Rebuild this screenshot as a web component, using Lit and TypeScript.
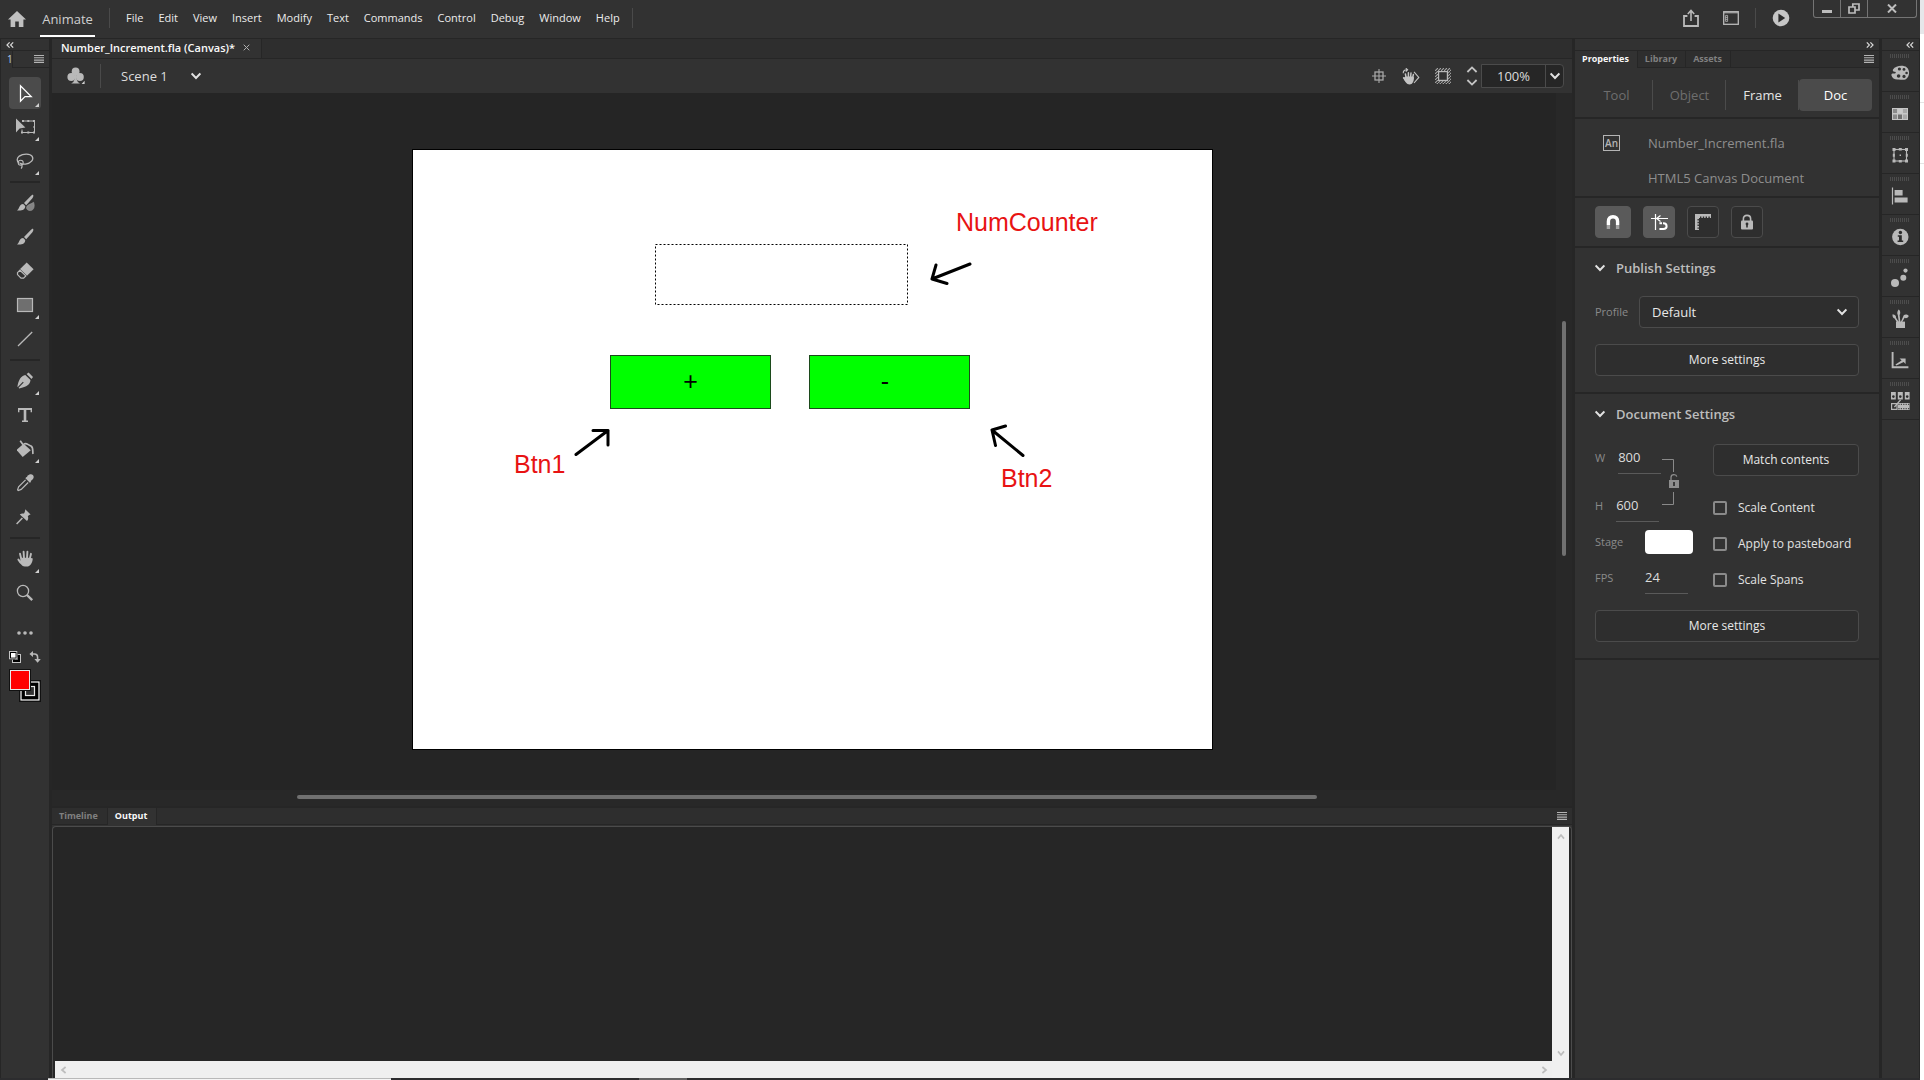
import { LitElement, html, css, svg } from "lit";
import { customElement, state } from "lit/decorators.js";

type Glyph = ReturnType<typeof svg>;

const glyph = (w: number, h: number, body: Glyph) =>
  html`<svg class="glyph" width=${w} height=${h} viewBox="0 0 ${w} ${h}" aria-hidden="true">${body}</svg>`;

const chevronDown = () =>
  glyph(10, 8, svg`<path d="M.6 1.5 L5 6 L9.4 1.5" fill="none" stroke="#e2e2e2" stroke-width="2"/>`);

const hamburger = () =>
  glyph(10, 8, svg`<path d="M0 .5H10M0 2.8H10M0 5.1H10M0 7.4H10" stroke="#b4b4b4" stroke-width="1.1"/>`);

const foldLeft = () =>
  glyph(8, 6, svg`<path d="M3.6 .4 L1 3 L3.6 5.6 M7.2 .4 L4.6 3 L7.2 5.6" fill="none" stroke="#d8d8d8" stroke-width="1.2"/>`);

const foldRight = () =>
  glyph(8, 6, svg`<path d="M.8 .4 L3.4 3 L.8 5.6 M4.4 .4 L7 3 L4.4 5.6" fill="none" stroke="#d8d8d8" stroke-width="1.2"/>`);

const I = "#b9b9b9";

interface Tool {
  name: string;
  more?: boolean;
  art: Glyph;
}

const toolGroups: Tool[][] = [
  [
    { name: "Selection", more: true, art: svg`<path d="M5.5 2.8V18.2L10 13.6H16.2Z" fill="none" stroke="#fff" stroke-width="1.3"/>` },
    {
      name: "Free Transform", more: true,
      art: svg`<path d="M1 1.5V15.5L4.6 11.4L10.4 10.4Z" fill=${I}/>
        <path d="M9 4H19.5V15.5H7V12.5" fill="none" stroke=${I}/>
        <path d="M6 14.5h2v2h-2zM12.3 14.5h2v2h-2zM18 14.5h2v2h-2zM18.5 9h1.8v2h-1.8zM18 3h2v2h-2zM12.3 3h2v2h-2zM7 3h2v2h-2z" fill=${I}/>`,
    },
    {
      name: "Lasso", more: true,
      art: svg`<path d="M4.2 12.3C1.4 10.6 1.6 7.2 4.3 5.1C8 2.4 15.2 2.3 17.2 5.4C19.1 8.6 16 12.4 10.6 13.1C8.7 13.3 6.6 13.1 5.4 12.6" fill="none" stroke=${I} stroke-width="1.3"/>
        <circle cx="5.7" cy="11.7" r="2.5" fill="none" stroke=${I} stroke-width="1.1"/><path d="M4.6 12.2C6.8 12.4 8 14.6 6.2 17.6" fill="none" stroke=${I} stroke-width="1.2"/>`,
    },
  ],
  [
    {
      name: "Fluid Brush",
      art: svg`<path d="M18 1.8C18.8 2.6 18.3 3.9 17.4 5.2L11.2 12.2L9 10L15.8 3C16.7 2.1 17.4 1.4 18 1.8Z" fill=${I}/>
        <path d="M8.2 11L10.2 13C10.5 16.6 6.6 18.1 2 17.4C4.6 16.4 3.6 11.4 8.2 11Z" fill=${I}/>
        <path d="M18.6 9.3C19.7 12.2 19.6 17.4 15.2 17.6C12.8 17.6 11.2 16 11.6 14.2C12.1 11.8 15.5 11.4 18.6 9.3Z" fill="#858585" stroke="#9c9c9c" stroke-width=".6"/>`,
    },
    {
      name: "Classic Brush",
      art: svg`<path d="M18 1.8C18.8 2.6 18.3 3.9 17.4 5.2L11.2 12.2L9 10L15.8 3C16.7 2.1 17.4 1.4 18 1.8Z" fill=${I}/>
        <path d="M8.2 11L10.2 13C10.5 16.6 6.6 18.1 2 17.4C4.6 16.4 3.6 11.4 8.2 11Z" fill=${I}/>`,
    },
    {
      name: "Eraser",
      art: svg`<path d="M11.7 1.6L18.6 8.3L12 14.8L5.1 8.1Z" fill=${I}/>
        <path d="M5 9.2L10.8 14.9L8.6 17.1H6L2.5 13.6V11.7Z" fill="none" stroke=${I} stroke-width="1.2"/>`,
    },
    { name: "Rectangle", more: true, art: svg`<rect x="2.5" y="3.5" width="15" height="13" fill="#6f6f6f" stroke=${I} stroke-width="1.2"/>` },
    { name: "Line", art: svg`<path d="M3 17L17.2 3" stroke=${I} stroke-width="1.3"/>` },
  ],
  [
    {
      name: "Pen", more: true,
      art: svg`<path d="M11.6 2.9L13.6 1.4L18 5.9L16.5 8Z" fill=${I}/>
        <path d="M10.3 4L15.5 9C15.1 13.3 12 16 4.2 17.4L3.6 16.8L8.7 11.6L7.9 10.8L2.8 16L2.4 15.6C3.6 8.8 6 4.9 10.3 4Z" fill=${I}/>`,
    },
    { name: "Text", art: svg`<path d="M3 3H17V7.3H15.6V5H11.3V15.6H13V17H7V15.6H8.7V5H4.4V7.3H3Z" fill=${I}/>` },
    {
      name: "Paint Bucket", more: true,
      art: svg`<path d="M8.6 4.8L15.8 11.2L7.7 18L2 11.6V10.6Z" fill=${I}/>
        <path d="M5.2 1.8L10.6 9.2M9 5.2C11 3 13.2 6.2 16 7C18.6 8.6 17.4 12 18 15" fill="none" stroke=${I} stroke-width="1.7"/>`,
    },
    {
      name: "Eyedropper",
      art: svg`<path d="M12.4 2.8C14.4 .8 16.8 .7 18.1 2.3C19.3 3.9 18.6 5.7 17 7L15.7 8L16 9L14.8 9.8L10.4 5.2L11.3 4.1L12 4.2Z" fill=${I}/>
        <path d="M10.6 6.8L3.6 13.8L2.6 16.9L3.2 17.5L6.2 16.4L13.2 9.5" fill="none" stroke=${I} stroke-width="1.2"/>`,
    },
    {
      name: "Asset Warp",
      art: svg`<path d="M10.2 2.3L15.6 7.6C14.4 7.8 13.6 8.4 12.8 9.2C13.6 11 13.2 12.6 12 14L4.8 7.4C6 6.4 7.6 6.2 9 6.6C9.8 5.4 10.2 4 10.2 2.3Z" fill=${I}/>
        <path d="M7.4 11L1.6 17" stroke=${I} stroke-width="1.5"/>`,
    },
  ],
  [
    {
      name: "Hand", more: true,
      art: svg`<path d="M6.4 10.5L5 4.7M9 9.6L8.6 2.8M12 9.6L12.4 2.8M14.6 10.6L16 4.8M5.6 13.6L3.4 10.6" stroke=${I} stroke-width="1.9" stroke-linecap="round"/>
        <path d="M5.6 8.8L15.4 8.8L17.8 9.4C17.6 12 16.4 17.6 11.4 17.6C7 17.6 5.4 15 3 10.4L5.8 11.6Z" fill=${I}/>`,
    },
    {
      name: "Zoom",
      art: svg`<circle cx="8" cy="8" r="5.6" fill="none" stroke=${I} stroke-width="1.3"/><path d="M12 12L17.2 17.2" stroke=${I} stroke-width="2.4"/>`,
    },
  ],
];

const dockArt: { name: string; art: Glyph }[] = [
  {
    name: "Color",
    art: svg`<path fill-rule="evenodd" d="M3 6.4C5.6 2.8 13 1.6 16.8 4.4C20.4 7.4 19.6 14.6 15.4 16.4C12.6 17.4 10.4 16.2 7.8 16.4C4.8 16.6 2 15.2 1.4 12.2C1.2 10.6 2.8 10.4 4.2 10.6C5.8 10.6 6.4 9.4 5.2 8.8C3.8 8.6 2.2 8 3 6.4Z" fill=${I}/>
      <g fill="#323232"><circle cx="9.4" cy="6" r="1.6"/><circle cx="14" cy="6.4" r="1.4"/><circle cx="16.6" cy="10" r="1.3"/><circle cx="14" cy="13.4" r="1.6"/><circle cx="8.6" cy="13" r="1.8"/></g>`,
  },
  {
    name: "Swatches",
    art: svg`<rect x="2" y="4" width="16" height="12" fill="#c6c6c6"/><path d="M3 5h4v4h-4zM3 10.5h4v4.5h-4z" fill="#8b8b8b"/><path d="M8 5h4v4h-4z" fill="#c9c9c9"/><path d="M13 5h4v4h-4zM13 10.5h4v4.5h-4z" fill="#a7a7a7"/><path d="M8 10.5h4v4.5h-4z" fill="#6f6f6f"/>`,
  },
  {
    name: "Align Bounds",
    art: svg`<rect x="4" y="4.5" width="12.5" height="11.5" fill="none" stroke=${I} stroke-width="1.1"/><path d="M2.5 3h3v3h-3zM8.8 3h3v2.4h-3zM15 3h3v3h-3zM2.5 14.6h3v3h-3zM8.8 15h3v2.6h-3zM15 14.6h3v3h-3zM2.8 8.8h2v3h-2zM15.8 8.8h2v3h-2zM9.6 9.6h1.4v1.4h-1.4z" fill=${I}/>`,
  },
  { name: "Align", art: svg`<path d="M2.5 1.5V18.5" stroke=${I} stroke-width="1.2"/><path d="M4.6 4H12.6V9.4H4.6ZM4.6 11.6H17.6V16.6H4.6Z" fill=${I}/>` },
  {
    name: "Info",
    art: svg`<circle cx="10.3" cy="10" r="8.2" fill=${I}/><circle cx="10.4" cy="5.5" r="1.7" fill="#2c2c2c"/><path d="M7.8 8.2H11.8V13.4H13.2V15H7.6V13.4H9V9.8H7.8Z" fill="#2c2c2c"/>`,
  },
  { name: "Motion Presets", art: svg`<circle cx="5" cy="15" r="4" fill=${I}/><circle cx="13.3" cy="9.8" r="3" fill=${I}/><circle cx="15.5" cy="2.6" r="2.1" fill=${I}/>` },
  {
    name: "Brush Library",
    art: svg`<path d="M6 12.6H15V19H6Z" fill=${I}/><path d="M8.6 .4C10.8 1.8 10.4 4.8 9.6 6L10.4 13H8.8L7.8 6C6.8 4.6 7.4 1.8 8.6 .4ZM2.6 5.2C5.2 5.4 6.4 7.2 6 8.8L8.8 13H6.8L4.6 9.4C3 9.2 2.2 7 2.6 5.2ZM18.8 7C17.6 9.2 16 9.6 14.6 8.8L12.2 13H10.8L13.2 7.6C13.4 5.6 16.6 4.6 18.8 7Z" fill=${I}/>`,
  },
  { name: "Transform", art: svg`<path d="M2.6 2V17.2H18.4" fill="none" stroke=${I} stroke-width="1.9"/><path d="M9.6 8.4H15.6V14L13.7 12.1L6.4 15.6L5.4 14.4L11.6 10.4Z" fill=${I}/>` },
  {
    name: "Frame Picker",
    art: svg`<path d="M1 1h4.8v7.4H1zM7.8 1h5v7.4h-5zM14.8 1h4.8v7.4h-4.8z" fill=${I}/><g fill="#2c2c2c"><circle cx="3.4" cy="5.6" r="1.3"/><circle cx="10.3" cy="5.6" r="1.3"/><circle cx="17.2" cy="5.6" r="1.3"/></g>
      <path d="M1.6 12.6H7V18.4H1.6Z" fill="none" stroke=${I} stroke-width="1.2"/><path d="M8 12H19.6V19H8Z" fill=${I}/><path d="M8.4 13.3H19.6M8.4 17.7H19.6" stroke="#2c2c2c" stroke-width="1" stroke-dasharray="1.2 1.2"/><path d="M4.4 16L10.6 8.8" stroke=${I} stroke-width="1.3"/>`,
  },
];

const menus = ["File", "Edit", "View", "Insert", "Modify", "Text", "Commands", "Control", "Debug", "Window", "Help"];

@customElement("app-root")
export class AppRoot extends LitElement {
  @state() private tool = "Selection";

  static styles = css`
    :host {
      display: grid;
      grid-template-columns: minmax(0, 1fr) 4px;
      height: 100vh;
      overflow: hidden;
      background: #262626;
      color: #dcdcdc;
      font: 12px/16px "Open Sans", "Noto Sans", sans-serif;
    }
    * { box-sizing: border-box; }
    .glyph { display: block; flex: none; }
    button, input, select {
      margin: 0; padding: 0; border: 0; background: none;
      color: inherit; font: inherit; border-radius: 0; outline: none;
    }
    .window { display: grid; grid-template-rows: 39px minmax(0, 1fr) 2px; min-width: 0; min-height: 0; }
    .behind {
      background: linear-gradient(#e6e7ea 34px, #fff 34px, #fff 102px, #e4e4e4 102px, #e4e4e4 103px, #fff 103px, #fff 163px, #e4e4e4 163px, #e4e4e4 164px, #fff 164px);
    }

    .menubar { display: flex; background: #323232; border-bottom: 1px solid #262626; padding: 0 3px 0 8px; }
    .home { display: flex; align-items: center; width: 32px; }
    .brand {
      width: 55px; height: 37px; padding-top: 3px; margin-right: 14px; font-size: 13px; text-align: center;
      border-bottom: 2px solid #fff; color: #cfcfcf;
    }
    .rule { width: 1px; background: #4a4a4a; height: 20px; margin-top: 8px; }
    .menus { display: flex; height: 36px; margin: 0 5px 0 8px; font-size: 11px; }
    .menus button { padding: 0 7px 0 8px; color: #ececec; }
    .app-tools { display: flex; align-items: flex-start; margin-left: auto; }
    .app-tools .icon { display: grid; place-items: center; height: 36px; width: 40px; }
    .app-tools .rule { margin-left: 4px; margin-right: 5px; }
    .win-controls {
      display: flex; height: 18px; margin-left: 12px;
      border: 1px solid #747474; border-top: 0; border-radius: 0 0 3px 3px;
    }
    .win-controls button { display: grid; place-items: center; width: 27px; border-right: 1px solid #747474; }
    .win-controls .close { width: 48px; border-right: 0; }

    .workspace {
      display: grid; grid-template-columns: 48px minmax(0, 1fr) 304px 37px; column-gap: 3px;
      padding: 0 1px; min-height: 0;
    }
    .fold {
      display: flex; align-items: center; height: 12px; background: #323232;
      border-bottom: 1px solid #262626; padding: 0 5px;
    }
    .fold.end { justify-content: flex-end; }

    .toolbar { background: #323232; display: flex; flex-direction: column; }
    .tool-tabs { display: flex; height: 17px; }
    .tool-tabs .one { width: 11px; padding-left: 6px; font-size: 10px; color: #b7d0ea; overflow: hidden; }
    .tool-tabs .menu {
      flex: 1; display: flex; align-items: center; justify-content: flex-end; padding-right: 5px;
      border-left: 1px solid #262626; border-bottom: 1px solid #262626;
    }
    .tools { display: flex; flex-direction: column; padding-top: 8px; }
    .group { display: flex; flex-direction: column; align-items: center; }
    .group + .group::before {
      content: ""; width: 30px; height: 8px;
      background: linear-gradient(transparent 3px, #262626 3px, #262626 5px, transparent 5px);
    }
    .tool {
      display: grid; place-items: center; width: 32px; height: 32px; margin: 1px 0; border-radius: 4px;
      position: relative;
    }
    .tool.on { background: #4b4b4b; }
    .tool.more::after {
      content: ""; position: absolute; right: 2px; bottom: 2px; border: 2px solid transparent;
      border-right-color: #d0d0d0; border-bottom-color: #d0d0d0;
    }
    .overflow { display: grid; place-items: center; height: 41px; padding-top: 5px; }
    .color-row { display: flex; justify-content: space-between; padding: 0 8px; height: 13px; }
    .swatches { padding: 5px 0 0 8px; }

    .document { display: flex; flex-direction: column; min-width: 0; min-height: 0; }
    .doc-tabs { display: flex; height: 20px; background: #2e2e2e; border-bottom: 1px solid #262626; }
    .doc-tab {
      display: flex; align-items: center; gap: 8px; padding: 0 11px 2px 9px; background: #323232;
      border-right: 1px solid #262626; font-size: 11px; font-weight: 600; color: #fafafa;
    }
    .scene-bar { display: flex; align-items: center; height: 34px; background: #323232; padding: 0 8px 0 15px; }
    .scene-bar .rule { height: 24px; margin: 0 20px 0 15px; }
    .scene { display: flex; align-items: center; gap: 23px; font-size: 13px; }
    .view-tools { margin-left: auto; display: flex; align-items: center; gap: 15px; }
    .spin { display: grid; gap: 6px; }
    .zoom {
      display: flex; height: 24px; margin-left: -12px; background: #262626; border: 1px solid #4b4b4b;
      border-radius: 0 4px 4px 0;
    }
    .zoom input { width: 64px; text-align: center; font-size: 13px; border-right: 1px solid #4b4b4b; }
    .zoom button { display: grid; place-items: center; width: 17px; }

    .canvas {
      flex: 1; min-height: 0; display: grid; background: #282828;
      grid-template: minmax(0, 1fr) 16px / minmax(0, 1fr) 16px;
    }
    .pasteboard { background: #252525; padding: 56px 0 0 360px; overflow: hidden; }
    .v-scroll { display: grid; grid-template-rows: 228fr 235fr 234fr; justify-items: center; }
    .v-scroll i { grid-row: 2; width: 4px; border-radius: 2px; background: #707070; }
    .h-scroll { display: grid; grid-template-columns: 245fr 1020fr 239fr; align-items: start; padding-top: 5px; }
    .h-scroll i { grid-column: 2; height: 4px; border-radius: 2px; background: #707070; }
    .stage {
      position: relative; width: 801px; height: 601px; background: #fff; border: 1px solid #000;
      font: 25px/28px "Liberation Sans", Arial, sans-serif; color: #e81313;
    }
    .stage > * { position: absolute; }
    .arrows { left: 0; top: 0; }
    .shape {
      top: 205px; width: 161px; height: 54px; background: #0f0; border: 1px solid #1c4a1c; color: #000;
      padding-bottom: 2px;
    }
    .plus { left: 197px; }
    .minus { left: 396px; padding-right: 9px; }
    .name-counter { left: 543px; top: 58px; }
    .name-one { left: 101px; top: 300px; }
    .name-two { left: 588px; top: 314px; }

    .panel { flex: 0 0 25vh; display: flex; flex-direction: column; margin-top: 2px; background: #323232; }
    .tabs {
      display: flex; height: 17px; background: #2e2e2e; border-bottom: 1px solid #262626;
      font-size: 9px; font-weight: 700; line-height: 14px; color: #808080;
    }
    .tabs button { padding: 0 8px 1px 7px; border-right: 1px solid #262626; }
    .panel .tabs button { padding-right: 9px; }
    .tabs .on { background: #323232; color: #f8f8f8; height: 17px; padding-bottom: 2px; }
    .panel .tabs .menu, .tabs .menu { margin-left: auto; padding: 0 5px; border: 0; }
    .output {
      flex: 1; display: grid; grid-template: minmax(0, 1fr) 17px / minmax(0, 1fr) 17px;
      margin: 1px 0 0; padding: 0 2px; background: #262626;
      border: 1px solid #4b4b4b; border-bottom: 0; border-radius: 4px 4px 0 0;
    }
    .bar { display: flex; justify-content: space-between; align-items: center; background: #f0f0f0; }
    .bar.v { flex-direction: column; padding: 6px 0 4px; }
    .bar.h { padding: 0 4px 0 5px; background: #efefef; }
    .corner { background: #f0f0f0; }

    .props { display: flex; flex-direction: column; background: #323232; min-height: 0; }
    .section { border-bottom: 2px solid #262626; padding: 0 20px; }
    .segments { display: grid; grid-template-columns: repeat(4, 1fr); padding: 11px 7px 6px 5px; font-size: 13px; }
    .segments button { height: 32px; background: linear-gradient(#4b4b4b, #4b4b4b) right / 1px 30px no-repeat; color: #e4e4e4; }
    .segments .off { color: #6e6e6e; }
    .segments .on { background: #4b4b4b; border-radius: 4px; color: #fff; }
    .info { display: grid; grid-template-columns: 45px 1fr; row-gap: 11px; padding: 12px 20px 6px 28px; font-size: 13px; line-height: 24px; color: #8e8e8e; }
    .info .an {
      width: 17px; height: 16px; margin-top: 4px; border: 1px solid #b4b4b4; color: #b4b4b4;
      font-size: 10px; line-height: 14px; font-weight: 600; text-align: center;
    }
    .info .kind { grid-column: 2; }
    .snaps { display: flex; gap: 12px; padding-top: 8px; padding-bottom: 8px; }
    .snaps button { display: grid; place-items: center; width: 32px; height: 32px; border: 1px solid #4b4b4b; border-radius: 4px; background: #2e2e2e; }
    .snaps .on { background: #5a5a5a; border-color: #5a5a5a; }
    .snaps .wide { width: 36px; }
    .block { padding-top: 4px; padding-bottom: 16px; }
    h2 { display: flex; align-items: center; gap: 11px; height: 32px; margin: 0; font-size: 13px; font-weight: 600; color: #bdbdbd; }
    .profile { display: flex; align-items: center; margin: 12px 0 16px; }
    .profile label { width: 44px; }
    label.dim { color: #8a8a8a; font-size: 11px; }
    .select { flex: 1; display: grid; align-items: center; }
    .select > * { grid-area: 1 / 1; }
    .select .glyph { justify-self: end; margin-right: 12px; pointer-events: none; }
    .boxed { height: 32px; border: 1px solid #4b4b4b; border-radius: 4px; background: #2e2e2e; color: #e8e8e8; }
    select { appearance: none; padding-left: 12px; width: 100%; font-size: 13px; }
    .full { width: 100%; display: block; }
    .form { display: grid; grid-template-columns: 118px 1fr; grid-template-rows: 60px 36px 36px 36px; align-items: center; margin-bottom: 12px; }
    .field { grid-column: 1; display: flex; align-items: center; gap: 13px; padding-bottom: 4px; }
    .field.fixed { gap: 0; }
    .field.fixed label { width: 50px; }
    .field input { width: 43px; height: 32px; padding-bottom: 2px; border-bottom: 1px solid #5a5a5a; font-size: 13px; }
    .stage-color { width: 48px; height: 24px; border-radius: 4px; background: #fff; }
    .link { grid-area: 1 / 1 / 3 / 2; align-self: end; justify-self: start; margin: 0 0 16px 67px; }
    .side { grid-column: 2; }
    .check { display: flex; align-items: center; gap: 11px; white-space: nowrap; color: #e2e2e2; }
    .check input { appearance: none; width: 14px; height: 14px; border: 2px solid #8a8a8a; border-radius: 2px; }
    .r1 { grid-row: 1; } .r2 { grid-row: 2; } .r3 { grid-row: 3; } .r4 { grid-row: 4; }

    .dock { display: flex; flex-direction: column; background: #323232; }
    .dock-item {
      display: flex; flex-direction: column; align-items: center; gap: 5px; height: 41px; padding: 3px 2px 0 0;
      border-bottom: 1px solid #262626;
    }
    .dock-item::before {
      content: ""; width: 20px; height: 4px;
      background: repeating-linear-gradient(90deg, #4c4c4c 0 1px, transparent 1px 2px);
    }
    .taskbar { display: grid; grid-template-columns: 48px 343px 248px 48px minmax(0, 1fr); background: #2c2c2e; }
    .taskbar .search { background: #f4f4f4; border-top: 1px solid #b8b8b8; }
    .taskbar .app { grid-column: 4; background: #626262; }
  `;

  private renderMenubar() {
    return html`
      <header class="menubar">
        <button class="home" aria-label="Home">
          ${glyph(18, 16, svg`<path d="M9 0L18 8.6H15.4V16H10.8V10.4H7.2V16H2.6V8.6H0Z" fill="#c0c0c0"/>`)}
        </button>
        <button class="brand">Animate</button>
        <span class="rule"></span>
        <nav class="menus">${menus.map((m) => html`<button>${m}</button>`)}</nav>
        <span class="rule"></span>
        <div class="app-tools">
          <button class="icon" aria-label="Share">
            ${glyph(16, 18, svg`<path d="M4.4 7H1V17H15V7H11.6" fill="none" stroke=${I} stroke-width="1.8"/><path d="M8 12V2M4.8 5L8 1.4L11.2 5" fill="none" stroke=${I} stroke-width="1.6"/>`)}
          </button>
          <button class="icon" aria-label="Workspaces">
            ${glyph(16, 14, svg`<rect x=".7" y=".7" width="14.6" height="12.6" fill="none" stroke=${I} stroke-width="1.3"/><path d="M1 1.8H15" stroke=${I} stroke-width="1"/><path d="M2.6 4.4H4.6V10.4H2.6ZM2.6 6.4H4.6M2.6 8.4H4.6" fill="none" stroke=${I} stroke-width=".8"/>`)}
          </button>
          <span class="rule"></span>
          <button class="icon" aria-label="Test Movie">
            ${glyph(18, 18, svg`<circle cx="9" cy="9" r="8.3" fill="#c6c6c6"/><path d="M6.4 4.6L13.2 9L6.4 13.4Z" fill="#2b2b2b"/>`)}
          </button>
          <div class="win-controls">
            <button aria-label="Minimize">${glyph(10, 10, svg`<path d="M0 6H10V9H0Z" fill="#bdbdbd"/>`)}</button>
            <button aria-label="Restore">
              ${glyph(12, 11, svg`<path d="M4.8 1H11V7H4.8Z" fill="none" stroke="#bdbdbd" stroke-width="1.7"/><path d="M1 4H7V10H1Z" fill="#323232" stroke="#bdbdbd" stroke-width="1.7"/>`)}
            </button>
            <button class="close" aria-label="Close">${glyph(10, 9, svg`<path d="M1 .5L9 8.5M9 .5L1 8.5" stroke="#bdbdbd" stroke-width="2"/>`)}</button>
          </div>
        </div>
      </header>
    `;
  }

  private renderTool(t: Tool) {
    return html`<button
      class="tool ${t.name === this.tool ? "on" : ""} ${t.more ? "more" : ""}"
      aria-label=${t.name}
      @click=${() => (this.tool = t.name)}
    >${glyph(20, 20, t.art)}</button>`;
  }

  private renderToolbar() {
    return html`
      <aside class="toolbar">
        <div class="fold">${foldLeft()}</div>
        <div class="tool-tabs"><span class="one">1</span><span class="menu">${hamburger()}</span></div>
        <div class="tools">${toolGroups.map((g) => html`<div class="group">${g.map((t) => this.renderTool(t))}</div>`)}</div>
        <button class="overflow" aria-label="Edit Toolbar">
          ${glyph(16, 4, svg`<circle cx="2" cy="2" r="1.8" fill=${I}/><circle cx="8" cy="2" r="1.8" fill=${I}/><circle cx="14" cy="2" r="1.8" fill=${I}/>`)}
        </button>
        <div class="color-row">
          ${glyph(12, 12, svg`<rect x="3.5" y="3.5" width="8" height="8" fill="#000" stroke="#c4c4c4"/><rect x="6.5" y="6.5" width="2" height="2" fill="#323232" stroke="#c4c4c4" stroke-width=".8"/><rect x="0" y="0" width="8.6" height="8.6" fill="#000"/><rect x=".5" y=".5" width="7.4" height="7.4" fill="#000" stroke="#c4c4c4"/><rect x="2" y="2" width="4.6" height="4.6" fill="#fff"/>`)}
          ${glyph(12, 12, svg`<path d="M3 3H5.4Q8.6 3 8.6 6.4V8.6" fill="none" stroke=${I} stroke-width="1.6"/><path d="M4 0V6L.4 3ZM5.4 8H11.8L8.6 11.8Z" fill=${I}/>`)}
        </div>
        <div class="swatches">
          ${glyph(32, 34, svg`<rect x="10.5" y="11.5" width="21" height="21" fill="#000" stroke="#111"/><rect x="12" y="13" width="18" height="18" fill="#000" stroke="#fff" stroke-width="1.2"/><rect x="16.5" y="17.5" width="9" height="9" fill="#323232" stroke="#e8e8e8" stroke-width="1.2"/><rect x=".5" y=".5" width="21" height="21" fill="#111" stroke="#111"/><rect x="1.5" y="1.5" width="19" height="19" fill="#f00" stroke="#e8e8e8"/>`)}
        </div>
      </aside>
    `;
  }

  private renderDocument() {
    return html`
      <main class="document">
        <div class="doc-tabs">
          <span class="doc-tab">Number_Increment.fla (Canvas)*
            <button aria-label="Close document">${glyph(7, 7, svg`<path d="M.7 .7L6.3 6.3M6.3 .7L.7 6.3" stroke="#b0b0b0"/>`)}</button>
          </span>
        </div>
        <div class="scene-bar">
          <button aria-label="Edit Symbols">
            ${glyph(18, 18, svg`<circle cx="8.6" cy="4.4" r="3.9" fill=${I}/><circle cx="4.3" cy="10" r="3.9" fill=${I}/><circle cx="12.9" cy="10" r="3.9" fill=${I}/><path d="M7.6 6H9.6V12Q10.2 15.4 13 16.6H4.2Q7 15.4 7.6 12Z" fill=${I}/><path d="M17.6 13.8V17H14.6Z" fill="#d0d0d0"/>`)}
          </button>
          <span class="rule"></span>
          <button class="scene">Scene 1 ${chevronDown()}</button>
          <div class="view-tools">
            <button aria-label="Center Stage">
              ${glyph(16, 16, svg`<path d="M8 1V15M1 8H15" stroke="#a8a8a8" stroke-width="1.1"/><rect x="4" y="4" width="8" height="8" fill="none" stroke="#a8a8a8" stroke-width="1.3"/>`)}
            </button>
            <button aria-label="Rotation">
              ${glyph(18, 17, svg`<path d="M4.2 10L3.4 6M6.4 9V4.8M8.6 9L9 5M10.6 10L11.4 6.4M3.6 12.6L1.6 9.8" stroke="#c4c4c4" stroke-width="1.5" stroke-linecap="round"/><path d="M3.6 8.4H11L12 9.4C12 13 10.6 16.4 7.6 16.4C4.4 16.4 3 13.4 1.4 10Z" fill="#c4c4c4"/><path d="M12 3.8L16.8 9.4L12 15M1.2 5.2C1.2 2.6 2.8 1.6 5 1.8M3.8 .2L5.6 1.8L3.8 3.6" fill="none" stroke="#c4c4c4" stroke-width="1.1"/>`)}
            </button>
            <button aria-label="Clip Content">
              ${glyph(16, 16, svg`<defs><pattern id="hatch" width="3" height="3" patternUnits="userSpaceOnUse"><path d="M0 3L3 0" stroke="#a4a4a4" stroke-width="1.1"/></pattern></defs><path fill-rule="evenodd" d="M0 0H16V16H0ZM3.6 3.6V12.4H12.4V3.6Z" fill="url(#hatch)"/><rect x="3.6" y="3.6" width="8.8" height="8.8" fill="none" stroke="#b9b9b9" stroke-width="1.2"/>`)}
            </button>
            <div class="spin">
              <button aria-label="Zoom in">${glyph(12, 7, svg`<path d="M1.4 6L6 1.4L10.6 6" fill="none" stroke="#c4c4c4" stroke-width="1.8"/>`)}</button>
              <button aria-label="Zoom out">${glyph(12, 7, svg`<path d="M1.4 1L6 5.6L10.6 1" fill="none" stroke="#c4c4c4" stroke-width="1.8"/>`)}</button>
            </div>
            <div class="zoom">
              <input aria-label="Zoom level" value="100%" />
              <button aria-label="Zoom presets">${chevronDown()}</button>
            </div>
          </div>
        </div>
        <div class="canvas">
          <div class="pasteboard">
            <div class="stage">
              <svg class="arrows" width="800" height="600" viewBox="0 0 800 600" aria-hidden="true">
                <rect x="242.5" y="94.5" width="252" height="60" fill="none" stroke="#000" stroke-dasharray="2 2" />
                <path
                  d="M557 114L519 129M523 115L519 129L534 133.5M163 304.5L195 280.5M180 280.5H195V295M610 305.5L579 280M592.5 276L579 280L582.5 295.5"
                  fill="none" stroke="#000" stroke-width="3" stroke-linecap="round" stroke-linejoin="round"
                />
              </svg>
              <button class="shape plus">+</button>
              <button class="shape minus">-</button>
              <span class="name-counter">NumCounter</span>
              <span class="name-one">Btn1</span>
              <span class="name-two">Btn2</span>
            </div>
          </div>
          <div class="v-scroll"><i></i></div>
          <div class="h-scroll"><i></i></div>
        </div>
        <section class="panel">
          <div class="tabs">
            <button>Timeline</button><button class="on">Output</button>
            <button class="menu" aria-label="Panel menu">${hamburger()}</button>
          </div>
          <div class="output">
            <div role="log" aria-label="Output"></div>
            <div class="bar v">
              ${glyph(8, 7, svg`<path d="M1 5.6L4 2L7 5.6" fill="none" stroke="#bdbdbd" stroke-width="1.7"/>`)}
              ${glyph(8, 7, svg`<path d="M1 1.4L4 5L7 1.4" fill="none" stroke="#bdbdbd" stroke-width="1.7"/>`)}
            </div>
            <div class="bar h">
              ${glyph(7, 8, svg`<path d="M5.6 1L2 4L5.6 7" fill="none" stroke="#bdbdbd" stroke-width="1.7"/>`)}
              ${glyph(7, 8, svg`<path d="M1.4 1L5 4L1.4 7" fill="none" stroke="#bdbdbd" stroke-width="1.7"/>`)}
            </div>
            <div class="corner"></div>
          </div>
        </section>
      </main>
    `;
  }

  private renderProperties() {
    return html`
      <aside class="props">
        <div class="fold end">${foldRight()}</div>
        <div class="tabs">
          <button class="on">Properties</button><button>Library</button><button>Assets</button>
          <button class="menu" aria-label="Panel menu">${hamburger()}</button>
        </div>
        <div class="section segments">
          <button class="off">Tool</button><button class="off">Object</button><button>Frame</button><button class="on">Doc</button>
        </div>
        <div class="section info">
          <span class="an">An</span><span>Number_Increment.fla</span>
          <span class="kind">HTML5 Canvas Document</span>
        </div>
        <div class="section snaps">
          <button class="on wide" aria-label="Snap to Objects">
            ${glyph(14, 14, svg`<path d="M2.4 10V6.4Q2.4 1.8 7 1.8Q11.6 1.8 11.6 6.4V10" fill="none" stroke="#fff" stroke-width="3.4"/><path d="M.7 10H4.1V14H.7ZM9.9 10H13.3V14H9.9Z" fill="#a4a4a4"/>`)}
          </button>
          <button class="on" aria-label="Snap Align">
            ${glyph(17, 17, svg`<path d="M4.5 0V16M0 4.5H17M9.5 1.5L5.6 4.5L9.5 7.5" fill="none" stroke="#fff" stroke-width="1.2"/><path d="M8.4 9.2H12.4Q15.6 9.2 15.6 12.2Q15.6 15 12.4 15H8.4" fill="none" stroke="#fff" stroke-width="2" stroke-dasharray="2.6 1 20"/>`)}
          </button>
          <button aria-label="Rulers">
            ${glyph(18, 18, svg`<path d="M1 1H17V5H5V17H1Z" fill=${I}/><path d="M6 4.2H17M4.2 6V17" stroke="#2e2e2e" stroke-width="1.4" stroke-dasharray="1.4 1.4"/>`)}
          </button>
          <button aria-label="Lock Guides">
            ${glyph(14, 16, svg`<path d="M3.4 8V4.8Q3.4 1.4 7 1.4Q10.6 1.4 10.6 4.8V8" fill="none" stroke=${I} stroke-width="1.6"/><rect x="1" y="6.6" width="12" height="9" rx="1" fill=${I}/><path d="M7 9.4V13.4" stroke="#2e2e2e" stroke-width="1.6"/><circle cx="7" cy="10" r="1.4" fill="#2e2e2e"/>`)}
          </button>
        </div>
        <div class="section block">
          <h2>${chevronDown()}Publish Settings</h2>
          <div class="profile">
            <label class="dim" for="profile">Profile</label>
            <div class="select"><select id="profile" class="boxed"><option>Default</option></select>${chevronDown()}</div>
          </div>
          <button class="boxed full">More settings</button>
        </div>
        <div class="section block">
          <h2>${chevronDown()}Document Settings</h2>
          <div class="form">
            <div class="field r1"><label class="dim" for="w">W</label><input id="w" value="800" /></div>
            <div class="field r2"><label class="dim" for="h">H</label><input id="h" value="600" /></div>
            <div class="field fixed r3"><label class="dim" for="stage">Stage</label><button id="stage" class="stage-color"></button></div>
            <div class="field fixed r4"><label class="dim" for="fps">FPS</label><input id="fps" value="24" /></div>
            <button class="link" aria-label="Link width and height">
              ${glyph(17, 56, svg`<path d="M0 5.5H11.5V18M11.5 38V50.5H0" fill="none" stroke="#8a8a8a"/><path d="M9 26V23.4Q9 20.6 12 20.6Q14.4 20.6 14.8 22.6" fill="none" stroke="#8e8e8e" stroke-width="1.3"/><rect x="7" y="26" width="10" height="8" fill="#8e8e8e"/><path d="M12 28V32" stroke="#323232" stroke-width="1.8"/>`)}
            </button>
            <button class="boxed side r1">Match contents</button>
            <label class="check side r2"><input type="checkbox" />Scale Content</label>
            <label class="check side r3"><input type="checkbox" />Apply to pasteboard</label>
            <label class="check side r4"><input type="checkbox" />Scale Spans</label>
          </div>
          <button class="boxed full">More settings</button>
        </div>
      </aside>
    `;
  }

  render() {
    return html`
      <div class="window">
        ${this.renderMenubar()}
        <div class="workspace">
          ${this.renderToolbar()} ${this.renderDocument()} ${this.renderProperties()}
          <aside class="dock">
            <div class="fold end">${foldLeft()}</div>
            ${dockArt.map((d) => html`<button class="dock-item" aria-label=${d.name}>${glyph(20, 20, d.art)}</button>`)}
          </aside>
        </div>
        <footer class="taskbar"><span></span><span class="search"></span><span class="app"></span></footer>
      </div>
      <div class="behind"></div>
    `;
  }
}
